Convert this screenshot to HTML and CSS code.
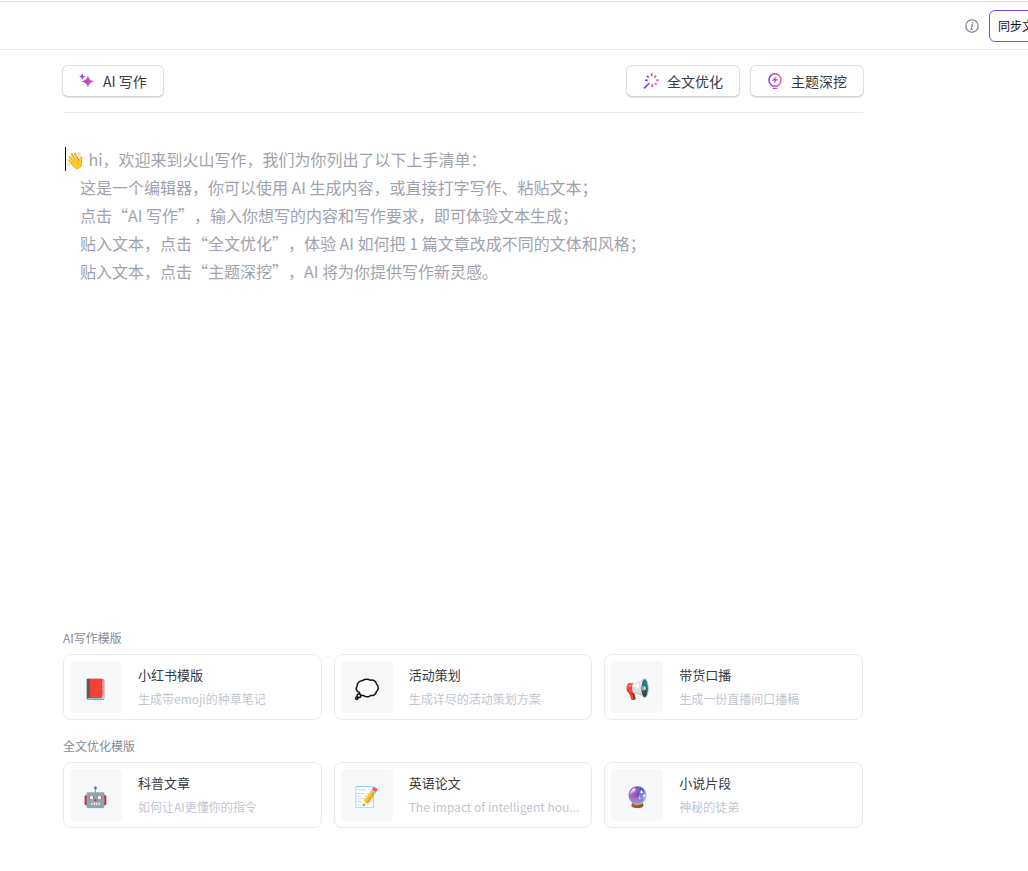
FILE: index.html
```html
<!DOCTYPE html>
<html lang="zh-CN">
<head>
<meta charset="utf-8">
<meta name="viewport" content="width=device-width, initial-scale=1">
<title>火山写作</title>
<link rel="stylesheet" href="styles.css">
</head>
<body>
<svg class="defs" width="0" height="0" aria-hidden="true">
  <defs>
    <linearGradient id="brand" gradientUnits="userSpaceOnUse" x1="1" y1="8" x2="15" y2="8">
      <stop offset="0" stop-color="#6a3dff"/>
      <stop offset="0.5" stop-color="#b94bc8"/>
      <stop offset="1" stop-color="#ff6b78"/>
    </linearGradient>
  </defs>
</svg>
<header class="topbar">
  <div class="topbar-inner">
    <button class="info" type="button" aria-label="说明">
      <svg width="14" height="14" viewBox="0 0 14 14" fill="none" stroke="#737886" stroke-width="1.100">
        <circle cx="7" cy="7" r="6.2"/>
        <path d="M6 6h1.500L6.400 10.200M5.400 10.200h2.200"/>
        <circle cx="7.800" cy="3.900" r=".4" fill="#737886" stroke-width=".6"/>
      </svg>
    </button>
    <button class="sync" type="button">同步文章</button>
  </div>
</header>
<main class="page">
  <div class="toolbar">
    <button class="tool" type="button">
      <svg width="16" height="16" viewBox="0 0 16 16" fill="url(#brand)">
        <path d="M9 2.200c.9 3.900 2.200 5.200 6.400 6.200-4.200 1-5.500 2.400-6.400 6.400-.9-4-2.200-5.400-6.400-6.400 4.200-1 5.500-2.300 6.400-6.200z"/>
        <path d="M3.300 .3c.5 2.100 1.100 2.700 3.200 3.200-2.100.5-2.700 1.100-3.200 3.200-.5-2.100-1.100-2.700-3.200-3.200 2.100-.5 2.700-1.100 3.200-3.200z"/>
      </svg>
      AI 写作
    </button>
    <div class="tool-group">
      <button class="tool" type="button">
        <svg width="16" height="16" viewBox="0 0 16 16" fill="none" stroke="url(#brand)" stroke-width="1.700">
          <path d="M1 15.400L6.400 10.100M8.700 .4L8.800 3.200M13.100 2.600L11.300 4.600M15.700 7.200L12.900 7.300M13.900 11.600L11.700 10.200M9.300 14.100L9.200 11.200M4 2.800L5.800 4.600M2 7.200L4.800 7.300"/>
        </svg>
        全文优化
      </button>
      <button class="tool" type="button">
        <svg width="16" height="16" viewBox="0 0 16 16" fill="none" stroke="url(#brand)" stroke-width="1.500">
          <path d="M5.600 12.900C3.200 11.600 2 9.300 2 6.800a6 6 0 0 1 12 0c0 2.500-1.200 4.800-3.600 6.100zM5.800 15.400h4.500"/>
          <path d="M8.900 3.700L5.300 7.400h2.200L7.100 10l3.600-3.700H8.500z" fill="url(#brand)" stroke-width=".3"/>
        </svg>
        主题深挖
      </button>
    </div>
  </div>
  <section class="editor" contenteditable="true" aria-label="编辑器">
    <p class="greeting">👋 hi，欢迎来到火山写作，我们为你列出了以下上手清单：</p>
    <p class="hint">这是一个编辑器，你可以使用 AI 生成内容，或直接打字写作、粘贴文本；</p>
    <p class="hint">点击“AI 写作”，输入你想写的内容和写作要求，即可体验文本生成；</p>
    <p class="hint">贴入文本，点击“全文优化”，体验 AI 如何把 1 篇文章改成不同的文体和风格；</p>
    <p class="hint">贴入文本，点击“主题深挖”，AI 将为你提供写作新灵感。</p>
  </section>
  <section class="templates">
    <h2 class="label">AI写作模版</h2>
    <div class="cards">
      <button class="card" type="button"><span class="thumb">📕</span><span class="info-text"><span class="title">小红书模版</span><span class="desc">生成带emoji的种草笔记</span></span></button>
      <button class="card" type="button"><span class="thumb">
        <svg width="26" height="26" viewBox="0 0 26 26" fill="#fff" stroke="#111" stroke-width="1.500" stroke-linejoin="round">
          <path d="M5.500 18.500C2.200 17.800 1.400 14.100 3.300 12.100 2.800 8.900 5.500 6.700 8.200 6.800 10.200 4.900 14.200 4.700 16.200 6.200 19.400 5.500 22.300 7.400 22.400 10 25 12 24.800 16 22.500 17.400 22.200 20.500 18.900 22 16.600 21.400 14.600 23.500 11 23.200 9.600 21.400 7.500 22.100 5.500 20.900 5.500 18.500z"/>
          <circle cx="4.900" cy="21.800" r="1.800"/>
          <circle cx="2.800" cy="24.200" r="1.100"/>
        </svg>
      </span><span class="info-text"><span class="title">活动策划</span><span class="desc">生成详尽的活动策划方案</span></span></button>
      <button class="card" type="button"><span class="thumb">📢</span><span class="info-text"><span class="title">带货口播</span><span class="desc">生成一份直播间口播稿</span></span></button>
    </div>
    <h2 class="label">全文优化模版</h2>
    <div class="cards">
      <button class="card" type="button"><span class="thumb">🤖</span><span class="info-text"><span class="title">科普文章</span><span class="desc">如何让AI更懂你的指令</span></span></button>
      <button class="card" type="button"><span class="thumb">📝</span><span class="info-text"><span class="title">英语论文</span><span class="desc">The impact of intelligent hou...</span></span></button>
      <button class="card" type="button"><span class="thumb">🔮</span><span class="info-text"><span class="title">小说片段</span><span class="desc">神秘的徒弟</span></span></button>
    </div>
  </section>
</main>
</body>
</html>
```
FILE: styles.css
```css
* { box-sizing: border-box; }
body {
  margin: 0;
  min-height: 100vh;
  display: flex;
  flex-direction: column;
  background: #fff;
  color: #353a44;
  font-family: "Noto Sans CJK SC", "Noto Color Emoji", sans-serif;
  font-size: 14px;
  text-spacing-trim: space-all;
  overflow-x: hidden;
}
button { font: inherit; color: inherit; margin: 0; cursor: pointer; }
.defs { position: absolute; }
.topbar {
  margin-top: 1px;
  border-top: 1px solid #dcdde0;
  border-bottom: 1px solid #eaebef;
  overflow: hidden;
}
.topbar-inner {
  display: flex;
  align-items: center;
  justify-content: flex-end;
  gap: 10px;
  min-width: 1079px;
  height: 47px;
  padding: 0 24px;
}
.info { display: flex; padding: 0; border: 0; background: none; }
.sync {
  height: 32px;
  padding: 0 8px;
  border: 1px solid #7547f5;
  border-radius: 6px;
  background: #fff;
  color: #0c0d0e;
  font-size: 12px;
}
.page {
  flex: 1;
  display: flex;
  flex-direction: column;
  width: 100%;
  max-width: 926px;
  padding: 15px 63px 43px;
}
.toolbar {
  display: flex;
  justify-content: space-between;
  margin-bottom: 32px;
  padding-bottom: 15px;
  border-bottom: 1px solid #eaebef;
}
.toolbar > .tool { margin-left: -1px; }
.tool-group { display: flex; gap: 10px; margin-right: -1px; }
.tool {
  display: flex;
  align-items: center;
  gap: 8px;
  height: 32px;
  padding: 0 16px;
  border: 1px solid #dddfe9;
  border-bottom-color: #cfd1da;
  border-radius: 6px;
  background: #fff;
  box-shadow: 0 1px 1px rgba(30, 34, 50, 0.12);
}
.editor {
  flex: 1;
  padding-left: 2px;
  color: #9fa2ae;
  font-size: 16px;
  line-height: 28px;
  outline: none;
}
.editor p { margin: 0; }
.greeting { position: relative; }
.greeting::before {
  content: "";
  position: absolute;
  left: 0;
  top: 2px;
  width: 1px;
  height: 24px;
  background: #000;
}
.editor .hint { padding-left: 15px; }
.label {
  margin: 0 0 6px;
  color: #858a96;
  font-size: 12px;
  font-weight: 400;
  line-height: 20px;
}
.cards {
  display: grid;
  grid-template-columns: repeat(3, minmax(0, 1fr));
  gap: 12px;
}
.cards + .label { margin-top: 16px; }
.card {
  display: flex;
  align-items: center;
  gap: 16px;
  height: 66px;
  padding: 6px;
  border: 1px solid #eaebef;
  border-radius: 8px;
  background: #fff;
  text-align: left;
}
.thumb {
  flex: none;
  display: flex;
  align-items: center;
  justify-content: center;
  width: 52px;
  height: 52px;
  border-radius: 4px;
  background: #f7f8fa;
  font-size: 20px;
}
.info-text { flex: 1; min-width: 0; display: flex; flex-direction: column; gap: 4px; }
.title { font-size: 13px; line-height: 20px; }
.desc {
  color: #c2c6d2;
  font-size: 12px;
  line-height: 20px;
  overflow: hidden;
  text-overflow: ellipsis;
  white-space: nowrap;
}
```
